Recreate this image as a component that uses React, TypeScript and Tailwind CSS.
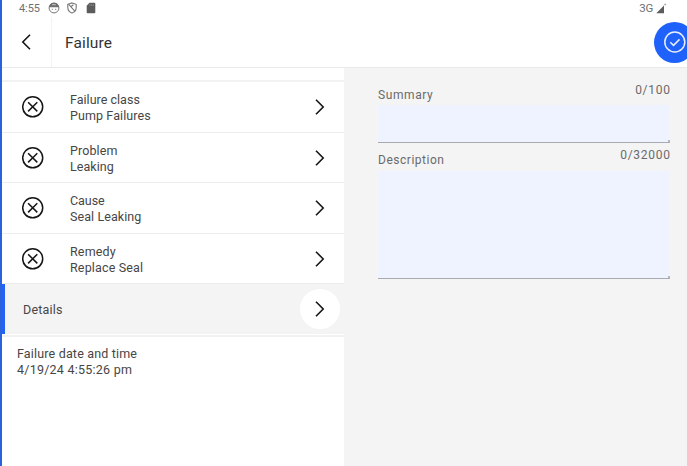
import React from 'react';

const rows = [
  { label: 'Failure class', value: 'Pump Failures', labelCls: 'tracking-[0.02px]', valueCls: 'tracking-[0.1px]', height: 'h-[51px]' },
  { label: 'Problem', value: 'Leaking', labelCls: 'tracking-[0.1px]', valueCls: 'tracking-[0.05px]', height: 'h-[50px]' },
  { label: 'Cause', value: 'Seal Leaking', labelCls: 'tracking-[-0.05px]', valueCls: 'tracking-[0.08px]', height: 'h-[51px]' },
  { label: 'Remedy', value: 'Replace Seal', labelCls: 'tracking-[0.15px]', valueCls: 'tracking-[0.16px]', height: 'h-[50px]' },
];

function Chevron({ left = false }: { left?: boolean }) {
  return (
    <svg width="10" height="16" viewBox="0 0 10 16" fill="none" stroke="#161616" strokeWidth="1.6" className="shrink-0">
      <path d={left ? 'M9 .8 1.8 8 9 15.2' : 'M1 .8l7.200 7.200L1 15.200'} />
    </svg>
  );
}

function CloseCircle() {
  return (
    <svg width="22" height="22" viewBox="0 0 22 22" fill="none" stroke="#161616" strokeWidth="1.5" className="shrink-0">
      <circle cx="10.7" cy="10.8" r="10" />
      <path d="M6.100 6.200l9.200 9.200M15.300 6.200l-9.200 9.200" />
    </svg>
  );
}

function StatusBar() {
  return (
    <div className="flex h-[17px] items-center pl-[17px] pr-[20px] text-[#707070]">
      <span className="w-[22px] whitespace-nowrap text-[11px] leading-[16px] tracking-[-0.1px]">4:55</span>
      <svg width="12" height="12" viewBox="0 0 12 12" className="-mt-px ml-[7px]">
        <circle cx="6" cy="6" r="4.9" fill="none" stroke="#777" strokeWidth="1" />
        <path d="M1 5.2C1.3 2.2 3.4.8 6 .8s4.700 1.400 5 4.400z" fill="#6f6f6f" />
        <path d="M4.200 2.700h3.600" stroke="#ddd" strokeWidth=".8" />
        <path d="M3.800 7.300h1M7.200 7.300h1" stroke="#6f6f6f" strokeWidth="1" />
      </svg>
      <svg width="10" height="12" viewBox="0 0 10 12" className="-mt-px ml-[7px]" fill="none" stroke="#777" strokeWidth="1.100">
        <path d="M5 .9 9.200 2.300v3.300C9.200 8.300 7.500 10.200 5 11.100 2.500 10.200.8 8.300.8 5.600V2.300z" />
        <path d="M1.500 2.200 8 9.300M3.800 4.700l2.600-2" />
      </svg>
      <svg width="10" height="12" viewBox="0 0 10 12" className="-mt-px ml-[9px]">
        <path d="M3.500.8H8.300Q9.300.8 9.300 1.800v8.400q0 1-1 1H1.700q-1 0-1-1V3.700z" fill="#5c5c5c" />
        <path d="M4 2.200v1.700M5.700 2.200v1.700M7.400 2.200v1.700" stroke="#999" strokeWidth=".7" />
      </svg>
      <span className="-mr-px -mt-[2px] ml-auto text-[11.500px] leading-[16px] tracking-[-0.3px]">3G</span>
      <svg width="11" height="11" viewBox="0 0 11 11" className="-mt-px ml-[4px]">
        <path d="M.3 10.300 8 2.600v7.700z" fill="#5c5c5c" />
        <path d="M8.500.7h1.300v1.500H8.500z" fill="#888" />
      </svg>
    </div>
  );
}

function Header() {
  return (
    <header className="flex h-[51px] items-stretch overflow-hidden border-b border-[#e9e9e9]">
      <div className="flex w-[50px] items-center border-r border-[#f3f3f3] pl-[19px]">
        <Chevron left />
      </div>
      <h1 className="self-center pl-[13px] pt-px text-[15.500px] leading-[20px] tracking-[0.14px] text-[#333]">Failure</h1>
      <div className="-mr-[8px] ml-auto flex size-[41px] shrink-0 items-center justify-center self-center rounded-full bg-[#1f62fb]">
        <svg width="22" height="22" viewBox="0 0 22 22" fill="none" stroke="#e8f0ff" strokeWidth="1.500">
          <circle cx="10.800" cy="11" r="10" />
          <path d="M6.300 11.200 9.500 14.400 15.500 8.400" />
        </svg>
      </div>
    </header>
  );
}

function Field({ label, count, box, labelCls, countCls }: { label: string; count: string; box: string; labelCls: string; countCls: string }) {
  return (
    <div>
      <div className="flex justify-between text-[12px] leading-[16px] text-[#6a6a6a]">
        <span className={`pt-[5px] ${labelCls}`}>{label}</span>
        <span className={countCls}>{count}</span>
      </div>
      <div className={`relative border-b border-[#a9a9b2] bg-[#eff3ff] ${box}`}>
        <i className="absolute bottom-0 right-0 size-[2px] bg-[#b6b6bf]" />
      </div>
    </div>
  );
}

export default function App() {
  return (
    <div className="flex h-[466px] w-[687px] flex-col overflow-hidden border-l-2 border-[#2a62dc] bg-white font-['Roboto','Noto_Sans',sans-serif]">
      <StatusBar />
      <Header />
      <main className="flex flex-1">
        <section className="w-[342px] text-[12.500px] leading-[16px] text-[#464646]">
          <div className="h-[14px] border-b-2 border-[#f2f2f2]" />
          {rows.map((row) => (
            <div key={row.label} className={`flex items-center border-b border-[#ededed] pl-[20px] pr-[19px] ${row.height}`}>
              <CloseCircle />
              <div className="ml-[26px] flex flex-col pt-[2px]">
                <span className={row.labelCls}>{row.label}</span>
                <span className={row.valueCls}>{row.value}</span>
              </div>
              <div className="ml-auto"><Chevron /></div>
            </div>
          ))}
          <div className="relative flex h-[50px] items-center bg-[#f4f4f4] pl-[21px] pr-[4px]">
            <i className="absolute inset-y-0 left-0 w-[3px] bg-[#2463f2]" />
            <span className="pt-px tracking-[0.2px]">Details</span>
            <div className="ml-auto flex size-[40px] items-center justify-center rounded-full bg-white"><Chevron /></div>
          </div>
          <div className="mt-px h-[2px] bg-[#f2f2f2]" />
          <div className="flex flex-col pl-[15px] pt-[9px]">
            <span className="tracking-[0.17px]">Failure date and time</span>
            <span className="tracking-[0.24px]">4/19/24 4:55:26 pm</span>
          </div>
        </section>
        <section className="flex-1 bg-[#f4f4f4] pl-[34px] pr-[17px] pt-[14px]">
          <Field label="Summary" count="0/100" box="mt-[2px] h-[38px]" labelCls="tracking-[0.6px]" countCls="-mr-[0.6px] tracking-[0.7px]" />
          <div className="h-[4px]" />
          <Field label="Description" count="0/32000" box="mt-[3px] h-[108px]" labelCls="tracking-[0.52px]" countCls="-mr-[0.6px] tracking-[0.7px]" />
        </section>
      </main>
    </div>
  );
}
